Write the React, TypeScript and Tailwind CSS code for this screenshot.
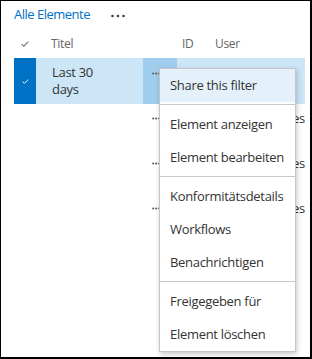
import React from 'react'

const menuSections = [
  ['Share this filter'],
  ['Element anzeigen', 'Element bearbeiten'],
  ['Konformitätsdetails', 'Workflows', 'Benachrichtigen'],
  ['Freigegeben für', 'Element löschen'],
]

function Dots({ big = false }: { big?: boolean }) {
  if (big) {
    return (
      <svg width="14" height="4" viewBox="0 0 14 4" fill="#444">
        <circle cx="1.5" cy="2" r="1.3" />
        <circle cx="7" cy="2" r="1.3" />
        <circle cx="12.5" cy="2" r="1.3" />
      </svg>
    )
  }
  return (
    <svg width="9" height="3" viewBox="0 0 9 3" fill="#555">
      <circle cx="1.2" cy="1.5" r="1" />
      <circle cx="4.2" cy="1.5" r="1" />
      <circle cx="7.2" cy="1.5" r="1" />
    </svg>
  )
}

function Check({ color, w = 8, h = 6 }: { color: string; w?: number; h?: number }) {
  return (
    <svg width={w} height={h} viewBox="0 0 8 6" fill="none">
      <path d="M0.6 3.2 L2.8 5.2 L7.4 0.6" stroke={color} strokeWidth="1.1" />
    </svg>
  )
}

export default function App() {
  return (
    <div className="relative w-[312px] h-[359px] overflow-hidden bg-white border-l border-t border-r-2 border-b-2 border-black font-['Segoe_UI','Open_Sans',sans-serif] text-[13px] tracking-[-0.3px] text-[#333]">
      {/* View header */}
      <div className="flex items-center h-[28px] pl-[13px]">
        <span className="text-[#0072c6] text-[13px] tracking-[-0.5px]">Alle Elemente</span>
        <span className="ml-[21px] mt-[1px] flex">
          <Dots big />
        </span>
      </div>

      {/* Column headers */}
      <div className="flex items-center h-[29px] ml-[13px] mr-[5px] text-[12px] text-[#666]">
        <div className="w-[22px] flex justify-center">
          <Check color="#777" />
        </div>
        <div className="w-[107px] pl-[15px]">Titel</div>
        <div className="w-[34px]" />
        <div className="w-[38px] pl-[5px]">ID</div>
        <div className="flex-1">User</div>
      </div>

      {/* Rows */}
      <div className="ml-[13px] mr-[5px]">
        <div className="flex h-[46px] bg-[#cde6f7]">
          <div className="w-[22px] bg-[#0072c6] flex items-center justify-center">
            <Check color="#fff" w={7} h={5} />
          </div>
          <div className="w-[107px] pl-[16px] pt-[6px] leading-[17px]">
            Last 30
            <br />
            days
          </div>
          <div className="w-[34px] bg-[#9fcdee] pl-[9px] pt-[14px]">
            <Dots />
          </div>
          <div className="w-[38px]" />
          <div className="flex-1" />
        </div>
        {[0, 1, 2].map((i) => (
          <div key={i} className="flex h-[45px]">
            <div className="w-[22px]" />
            <div className="w-[107px]" />
            <div className="w-[34px] pl-[9px] pt-[13px]">
              <Dots />
            </div>
            <div className="w-[38px]" />
            <div className="flex-1 pt-[6px] leading-[17px] text-right whitespace-nowrap">Yes</div>
          </div>
        ))}
      </div>

      {/* Context menu */}
      <div className="absolute left-[158px] top-[67px] w-[137px] bg-white border border-[#c6c6c6] shadow-[1px_2px_5px_rgba(0,0,0,0.22)]">
        {menuSections.map((section, si) => (
          <div key={si}>
            {si > 0 && <div className="mt-[2px] mb-[3px] border-t border-[#c8c8c8]" />}
            {section.map((label, li) => (
              <div
                key={label}
                className={`h-[33px] pl-[10px] pt-[1px] flex items-center whitespace-nowrap ${
                  si === 0 && li === 0 ? 'bg-[#e5f1fa]' : ''
                }`}
              >
                {label}
              </div>
            ))}
          </div>
        ))}
      </div>
    </div>
  )
}
